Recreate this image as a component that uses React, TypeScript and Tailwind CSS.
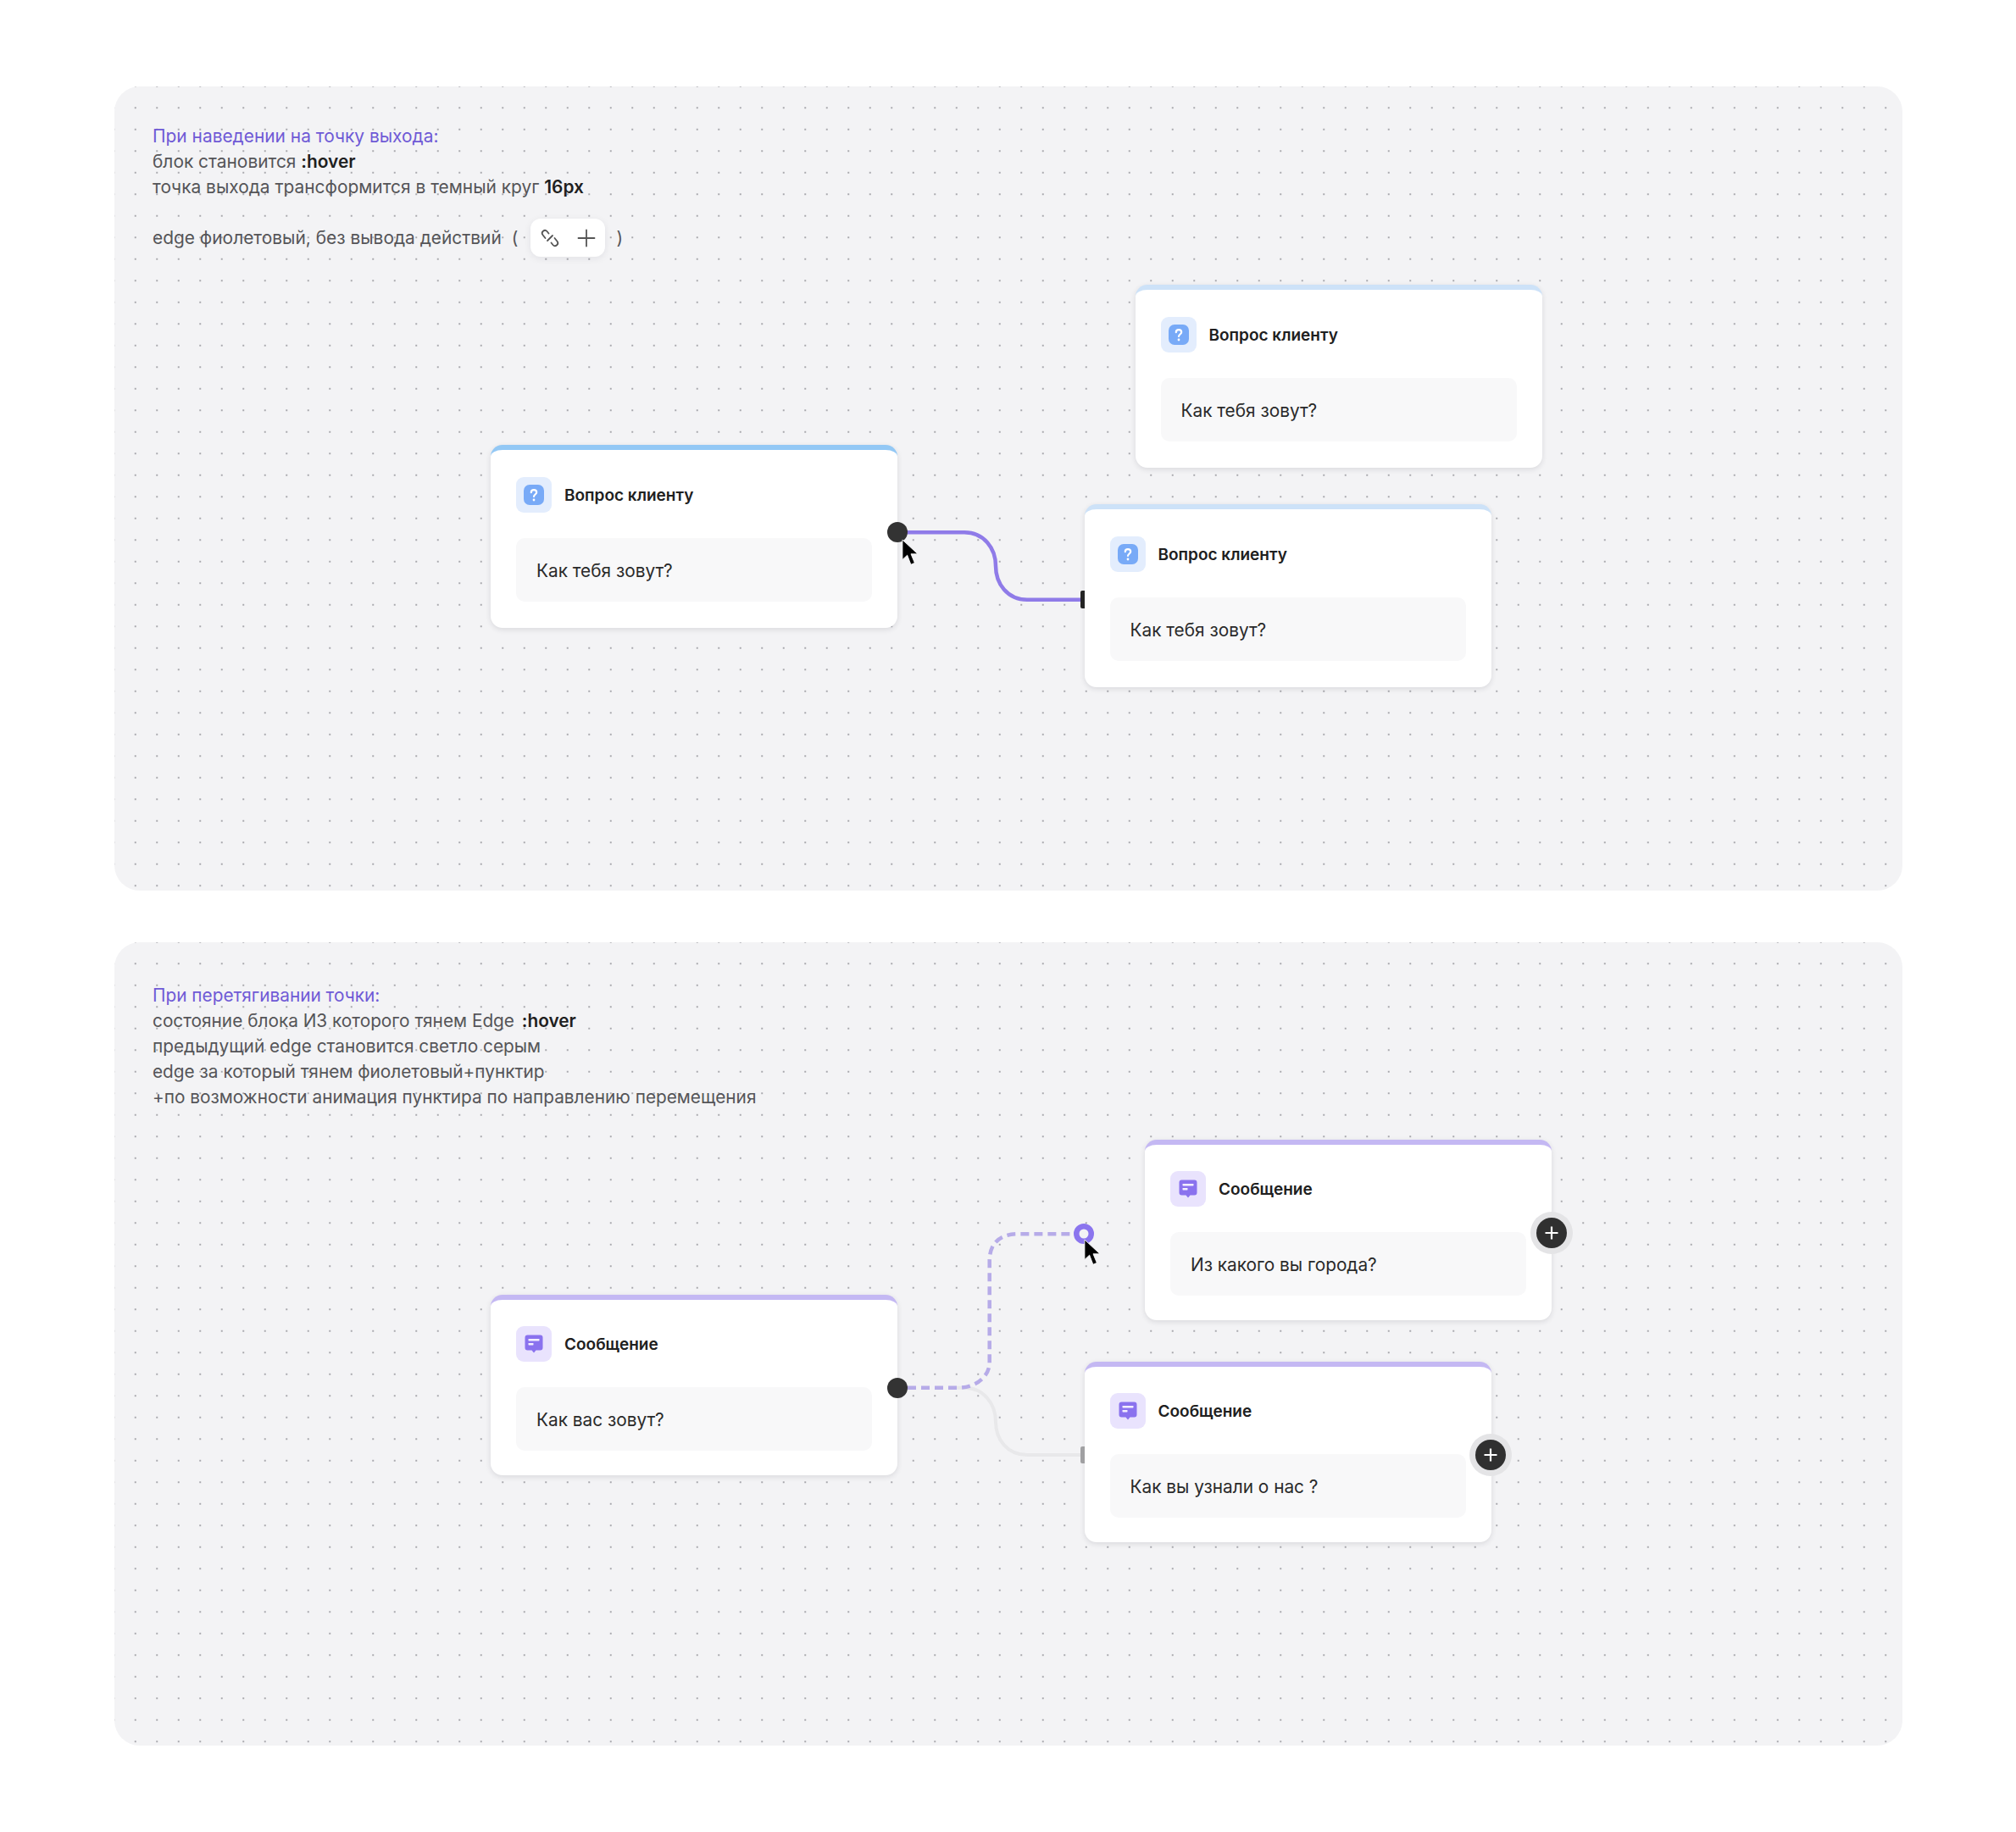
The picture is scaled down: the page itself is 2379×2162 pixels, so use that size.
const dots =
  "bg-[#f3f3f5] bg-[radial-gradient(circle,#a8a8ad_0.7px,transparent_1.1px)] bg-[length:25.5px_25.5px] bg-[position:12px_12.500px]";

function QuestionIcon() {
  return (
    <svg width="24" height="24" viewBox="0 0 24 24">
      <rect x="0" y="0" width="24" height="24" rx="7" fill="#78aaf7" />
      <path
        d="M8.800 9.200c0-1.800 1.400-3 3.200-3 1.800 0 3.200 1.200 3.200 2.800 0 2.400-3.200 2.600-3.200 5"
        fill="none"
        stroke="#fff"
        strokeWidth="2.200"
        strokeLinecap="round"
      />
      <circle cx="12" cy="18" r="1.400" fill="#fff" />
    </svg>
  );
}

function MessageIcon() {
  return (
    <svg width="22" height="22" viewBox="0 0 22 22">
      <path
        d="M3.500 0.500h15a3 3 0 0 1 3 3v12a3 3 0 0 1-3 3h-5l-2.500 3-2.500-3h-5a3 3 0 0 1-3-3v-12a3 3 0 0 1 3-3z"
        fill="#8a72ee"
      />
      <rect x="4.500" y="5" width="13" height="2.400" rx="0.600" fill="#f3efff" />
      <rect x="4.500" y="10" width="6" height="2.400" rx="0.600" fill="#f3efff" />
    </svg>
  );
}

function Node({
  left,
  top,
  kind,
  accent,
  text,
}: {
  left: string;
  top: string;
  kind: "question" | "message";
  accent: string;
  text: string;
}) {
  const question = kind === "question";
  return (
    <div
      className={`absolute w-[480px] rounded-[14px] border-t-[6px] bg-white shadow-[0_2px_6px_rgba(30,30,50,0.12)] ${accent} ${left} ${top} ${question ? "pb-[31px]" : "pb-[29px]"}`}
    >
      <div className={`flex items-center gap-[15px] pl-[30px] ${question ? "pt-[32px]" : "pt-[31px]"}`}>
        <div
          className={`flex h-[42px] w-[42px] items-center justify-center rounded-[9px] ${question ? "bg-[#e3edfd]" : "bg-[#e9e3fd]"}`}
        >
          {question ? <QuestionIcon /> : <MessageIcon />}
        </div>
        <span className="pt-[1px] text-[19px] font-semibold text-[#202020]">
          {question ? "Вопрос клиенту" : "Сообщение"}
        </span>
      </div>
      <div className="mx-[30px] mt-[30px] flex h-[75px] items-center rounded-[10px] bg-[#f8f8f9] pl-[24px] pt-[2px] text-[20.800px] text-[#2a2a2a]">
        {text}
      </div>
    </div>
  );
}

function Cursor({ className }: { className: string }) {
  return (
    <svg
      className={`absolute ${className}`}
      width="24"
      height="34"
      viewBox="0 0 22 32"
    >
      <path
        d="M1.500 1v22l5.400-5 4 10.500 4.200-1.800-4.100-10h7.500z"
        fill="#000"
        stroke="#fff"
        strokeWidth="0.800"
      />
    </svg>
  );
}

function PlusButton({ className }: { className: string }) {
  return (
    <div
      className={`absolute flex h-[36px] w-[36px] items-center justify-center rounded-full bg-[#303030] shadow-[0_0_0_7px_#e4e4e6] ${className}`}
    >
      <svg width="20" height="20" viewBox="0 0 20 20" stroke="#fff" strokeWidth="2.200">
        <path d="M10 2.500v15M2.500 10h15" />
      </svg>
    </div>
  );
}

function Panel({ height, children }: { height: string; children: React.ReactNode }) {
  return (
    <div
      className={`relative w-[2110px] rounded-[30px] ${height} ${dots} pl-[45px] font-['Inter',sans-serif] leading-[30px] text-[#555558]`}
    >
      {children}
    </div>
  );
}

export default function App() {
  return (
    <div className="flex min-h-[2162px] flex-col gap-[61px] bg-white pl-[135px] pt-[102px]">
      <Panel height="h-[949px]">
        <div className="pt-[44px] text-[20.900px]">
          <div className="text-[#6f5ad6]">При наведении на точку выхода:</div>
          <div>
            блок становится <b className="font-semibold text-[#1f1f1f]">:hover</b>
          </div>
          <div>
            точка выхода трансформится в темный круг{" "}
            <b className="font-semibold text-[#1f1f1f]">16px</b>
          </div>
          <div className="mt-[22px] flex h-[45px] items-center">
            <span>edge фиолетовый, без вывода действий</span>
            <span className="ml-[12px]">(</span>
            <span className="ml-[15px] flex h-[45px] w-[88px] items-center justify-between rounded-[12px] bg-white pl-[11px] pr-[10px] shadow-[0_2px_8px_rgba(30,30,50,0.08)]">
              <svg
                width="24"
                height="24"
                viewBox="0 0 24 24"
                fill="none"
                stroke="#555"
                strokeWidth="1.800"
                strokeLinecap="round"
              >
                <path d="M10.500 6.500 8.500 4a3.300 3.300 0 0 0-5 4.300L6.500 12" />
                <path d="M9 15l6-6" />
                <path d="M13.500 17.500l2 2.500a3.300 3.300 0 0 0 5-4.300L17.500 12" />
              </svg>
              <svg width="24" height="24" viewBox="0 0 24 24" stroke="#555" strokeWidth="1.800" strokeLinecap="round">
                <path d="M12 2.500v19M2.500 12h19" />
              </svg>
            </span>
            <span className="ml-[13px]">)</span>
          </div>
        </div>

        <svg className="absolute left-0 top-0" width="2110" height="948" fill="none">
          <path
            d="M924 526.300H1003C1026 526.300 1040 545 1040 566C1040 587 1054 605.700 1077 605.700H1144"
            stroke="#8f7be8"
            strokeWidth="4.500"
          />
        </svg>
        <Node left="left-[444px]" top="top-[423px]" kind="question" accent="border-[#93c8f5]" text="Как тебя зовут?" />
        <Node left="left-[1204.500px]" top="top-[234px]" kind="question" accent="border-[#cde2f8]" text="Как тебя зовут?" />
        <Node left="left-[1144.500px]" top="top-[493px]" kind="question" accent="border-[#cde2f8]" text="Как тебя зовут?" />
        <div className="absolute left-[1140px] top-[595px] h-[21px] w-[5px] rounded-l-[2px] bg-[#242424]" />
        <div className="absolute left-[912px] top-[514px] h-[24px] w-[24px] rounded-full bg-[#333]" />
        <Cursor className="left-[928px] top-[534px]" />
      </Panel>

      <Panel height="h-[948px]">
        <div className="pt-[47.500px] text-[20.800px]">
          <div className="text-[#6f5ad6]">При перетягивании точки:</div>
          <div>
            состояние блока ИЗ которого тянем Edge{" "}
            <b className="ml-[3px] font-semibold text-[#1f1f1f]">:hover</b>
          </div>
          <div>предыдущий edge становится светло серым</div>
          <div>edge за который тянем фиолетовый+пунктир</div>
          <div>+по возможности анимация пунктира по направлению перемещения</div>
        </div>

        <svg className="absolute left-0 top-0" width="2110" height="948" fill="none">
          <path
            d="M990 525.700H1003C1026 525.700 1040 545 1040 566C1040 587 1054 605 1077 605H1142"
            stroke="#e8e8ea"
            strokeWidth="4"
          />
          <path
            d="M936 525.700H996C1017 525.700 1032.700 512 1032.700 496V376C1032.700 355 1045 344.300 1066 344.300H1134"
            stroke="#b6abe8"
            strokeWidth="4.500"
            strokeDasharray="10 6"
          />
          <circle cx="1144" cy="344" r="8.750" stroke="#8b75ee" strokeWidth="6.500" />
        </svg>
        <Node left="left-[444px]" top="top-[416px]" kind="message" accent="border-[#c4b8f3]" text="Как вас зовут?" />
        <Node left="left-[1216px]" top="top-[233px]" kind="message" accent="border-[#c4b8f3]" text="Из какого вы города?" />
        <Node left="left-[1144.500px]" top="top-[495px]" kind="message" accent="border-[#c4b8f3]" text="Как вы узнали о нас ?" />
        <PlusButton className="left-[1678px] top-[325px]" />
        <PlusButton className="left-[1606px] top-[587px]" />
        <div className="absolute left-[1140px] top-[595px] h-[20px] w-[5px] rounded-l-[2px] bg-[#a0a0a2]" />
        <div className="absolute left-[912px] top-[514px] h-[24px] w-[24px] rounded-full bg-[#333]" />
        <Cursor className="left-[1143px] top-[350px]" />
      </Panel>
    </div>
  );
}
